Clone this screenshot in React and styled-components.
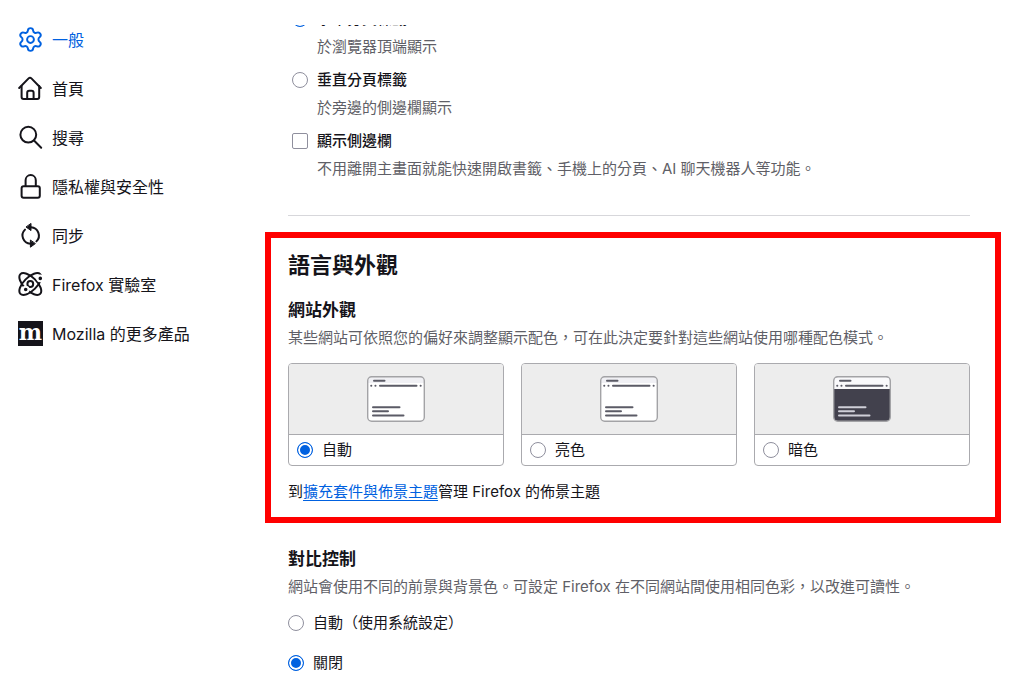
import React from "react";
import styled, { createGlobalStyle } from "styled-components";
import { Settings } from "lucide-react";

const GlobalStyle = createGlobalStyle`
  * {
    box-sizing: border-box;
  }
  body {
    margin: 0;
    background: #ffffff;
    color: #15141a;
    font-family: "Inter", "Noto Sans CJK TC", sans-serif;
    font-size: 15px;
    line-height: 22px;
  }
`;

const Page = styled.div`
  display: flex;
  padding-top: 25px;
`;

const Sidebar = styled.nav`
  display: flex;
  flex-direction: column;
  flex: 0 0 265px;
  gap: 24px;
  padding-top: 2px;
  padding-left: 18px;
`;

const Category = styled.a`
  display: flex;
  align-items: center;
  gap: 9px;
  height: 25px;
  font-size: 16px;
  text-decoration: none;
  color: ${(props) => (props.$active ? "#0061e0" : "#15141a")};
`;

const Icon = styled.svg`
  display: block;
  width: 25px;
  height: 25px;
  fill: none;
  stroke: currentColor;
  stroke-width: 2;
  stroke-linecap: round;
  stroke-linejoin: round;
`;

const GearIcon = styled(Icon)`
  stroke-width: 1.7;
`;

const MozillaMark = styled.span`
  width: 25px;
  height: 25px;
  background: #15141a;
  color: #ffffff;
  font-family: "DejaVu Serif", serif;
  font-size: 22px;
  font-weight: bold;
  line-height: 23px;
  text-align: center;
`;

const Main = styled.main`
  flex: 1;
  min-width: 0;
  padding-right: 23px;
`;

const Section = styled.section`
  padding: 0 31px 0 23px;
`;

// the list is scrolled a little, its first row is cut by the top edge
const TabsSection = styled(Section)`
  overflow: hidden;
`;

const OptionList = styled.div`
  margin-top: -17px;
  padding-left: 4px;
  padding-bottom: 35px;
  border-bottom: 1px solid #d7d7db;
  margin-left: 0;
`;

const Option = styled.div`
  margin-bottom: 11px;
`;

const OptionLabel = styled.label`
  display: flex;
  align-items: center;
  gap: 9px;
  font-weight: ${(props) => (props.$strong ? 500 : 400)};
`;

const OptionHint = styled.p`
  margin: 6px 0 0 25px;
  color: #5f5f67;
`;

const Radio = styled.input.attrs({ type: "radio" })`
  appearance: none;
  flex: none;
  width: 16px;
  height: 16px;
  margin: 0;
  border: 1px solid #8f8f9d;
  border-radius: 50%;
  background: #ffffff;

  &:checked {
    border-color: #0061e0;
    background: #0061e0;
    box-shadow: inset 0 0 0 2px #ffffff;
  }
`;

const Checkbox = styled.input.attrs({ type: "checkbox" })`
  appearance: none;
  flex: none;
  width: 16px;
  height: 16px;
  margin: 0;
  border: 1px solid #8f8f9d;
  border-radius: 2px;
  background: #ffffff;
`;

const Highlight = styled.section`
  margin-top: 16px;
  padding: 12px 25px 14px 17px;
  border: 6px solid #ff0000;
`;

const Title = styled.h1`
  margin: 0 0 18px;
  font-size: 22px;
  font-weight: 600;
  line-height: 30px;
`;

const Subtitle = styled.h2`
  margin: 0;
  font-size: 17px;
  font-weight: 600;
  line-height: 24px;
`;

const Description = styled.p`
  margin: 5px 0 0;
  color: #5f5f67;
`;

const Cards = styled.div`
  display: grid;
  grid-template-columns: repeat(3, 1fr);
  gap: 17px;
  margin: 14px 0 15px;
`;

const Card = styled.label`
  display: block;
  overflow: hidden;
  border: 1px solid #aaaaae;
  border-radius: 4px;
`;

const Preview = styled.div`
  display: flex;
  align-items: center;
  justify-content: center;
  height: 71px;
  border-bottom: 1px solid #aaaaae;
  background: #ededed;
`;

const CardLabel = styled.div`
  display: flex;
  align-items: center;
  gap: 9px;
  height: 30px;
  padding: 0 8px;
`;

const ThemeText = styled.p`
  margin: 0;
`;

const Link = styled.a`
  color: #0061e0;
  text-decoration: underline;
  text-underline-offset: 3px;
`;

const ContrastSection = styled(Section)`
  padding-top: 24px;
`;

const ContrastOptions = styled.div`
  display: flex;
  flex-direction: column;
  gap: 18px;
  margin-top: 14px;
`;

function HomeIcon() {
  return (
    <Icon viewBox="0 0 25 25">
      <path d="M1.2 12 10.6 2.4a2 2 0 0 1 2.8 0L22.8 12" />
      <path d="M3.6 10v11a2 2 0 0 0 2 2h13.6a2 2 0 0 0 2-2V10" />
      <path d="M9.2 23v-6.3a2 2 0 0 1 2-2h2.4a2 2 0 0 1 2 2V23" />
    </Icon>
  );
}

function SearchIcon() {
  return (
    <Icon viewBox="0 0 25 25">
      <circle cx="10.3" cy="9.7" r="7.9" />
      <path d="m16 15.5 7.2 7.2" />
    </Icon>
  );
}

function LockIcon() {
  return (
    <Icon viewBox="0 0 25 25">
      <rect x="3.6" y="12.3" width="18.2" height="11.4" rx="2" />
      <path d="M7.6 12V6.2a5.1 5.1 0 0 1 10.2 0V12" />
    </Icon>
  );
}

function SyncIcon() {
  return (
    <Icon viewBox="0 0 25 25">
      <path d="M13 4.2a8.3 8.3 0 0 1 5.4 14.2" />
      <path d="M12.4 20.8A8.3 8.3 0 0 1 7 6.6" />
      <path
        d="M13 .8v6.8L8.3 4.2ZM12.4 17.4v6.8l4.7-3.4Z"
        fill="currentColor"
        strokeWidth="1"
      />
    </Icon>
  );
}

function LabsIcon() {
  return (
    <Icon viewBox="0 0 25 25">
      <ellipse cx="12.3" cy="12" rx="14" ry="6.6" transform="rotate(45 12.3 12)" />
      <ellipse cx="12.3" cy="12" rx="14" ry="6.6" transform="rotate(-45 12.3 12)" />
      <circle cx="12.3" cy="12" r="2.9" />
      <g fill="currentColor" stroke="#ffffff">
        <circle cx="22.3" cy="6.4" r="2.8" />
        <circle cx="7.7" cy="17.5" r="2.8" />
      </g>
    </Icon>
  );
}

function WindowPreview({ dark }) {
  const line = dark ? "#cfcfd8" : "#5b5b66";
  return (
    <svg width="58" height="46" viewBox="0 0 58 46" fill="none">
      <rect x="1" y="1" width="56" height="44" rx="4" fill={dark ? "#42414d" : "#ffffff"} />
      <path
        d={dark ? "M1 13V5a4 4 0 0 1 4-4h48a4 4 0 0 1 4 4v8Z" : "M1 7V5a4 4 0 0 1 4-4h48a4 4 0 0 1 4 4v2Z"}
        fill={dark ? "#f9f9fb" : "#f0f0f4"}
      />
      <g stroke="#5b5b66" strokeWidth="2" strokeLinecap="round">
        <path d="M7 4.8h10.5M13 9.8h36.5" />
        <path d="M4.2 9.8h.1M8.4 9.8h.1M53.6 9.8h.1" />
      </g>
      <path
        d="M6 31.2h26.5M6 35.2h15M6 39.6h30.5"
        stroke={line}
        strokeWidth="2"
        strokeLinecap="round"
      />
      <rect x=".7" y=".7" width="56.6" height="44.6" rx="4" stroke="#a3a3a6" strokeWidth="1.4" />
    </svg>
  );
}

const categories = [
  {
    id: "general",
    label: "一般",
    icon: <GearIcon as={Settings} viewBox="1 1 22 22" />,
  },
  { id: "home", label: "首頁", icon: <HomeIcon /> },
  { id: "search", label: "搜尋", icon: <SearchIcon /> },
  { id: "privacy", label: "隱私權與安全性", icon: <LockIcon /> },
  { id: "sync", label: "同步", icon: <SyncIcon /> },
  { id: "labs", label: "Firefox 實驗室", icon: <LabsIcon /> },
  { id: "more", label: "Mozilla 的更多產品", icon: <MozillaMark>m</MozillaMark> },
];

const themes = [
  { id: "auto", label: "自動" },
  { id: "light", label: "亮色" },
  { id: "dark", label: "暗色" },
];

class App extends React.Component {
  state = {
    category: "general",
    tabs: "horizontal",
    theme: "auto",
    contrast: "off",
  };

  render() {
    const { category, tabs, theme, contrast } = this.state;

    return (
      <>
        <GlobalStyle />
        <Page>
          <Sidebar>
            {categories.map((item) => (
              <Category
                key={item.id}
                href={`#${item.id}`}
                $active={item.id === category}
                onClick={() => this.setState({ category: item.id })}
              >
                {item.icon}
                {item.label}
              </Category>
            ))}
          </Sidebar>
          <Main>
            <TabsSection>
              <OptionList>
                <Option>
                  <OptionLabel $strong>
                    <Radio
                      name="tabs"
                      checked={tabs === "horizontal"}
                      onChange={() => this.setState({ tabs: "horizontal" })}
                    />
                    水平分頁標籤
                  </OptionLabel>
                  <OptionHint>於瀏覽器頂端顯示</OptionHint>
                </Option>
                <Option>
                  <OptionLabel $strong>
                    <Radio
                      name="tabs"
                      checked={tabs === "vertical"}
                      onChange={() => this.setState({ tabs: "vertical" })}
                    />
                    垂直分頁標籤
                  </OptionLabel>
                  <OptionHint>於旁邊的側邊欄顯示</OptionHint>
                </Option>
                <OptionLabel $strong>
                  <Checkbox />
                  顯示側邊欄
                </OptionLabel>
                <OptionHint>
                  不用離開主畫面就能快速開啟書籤、手機上的分頁、AI 聊天機器人等功能。
                </OptionHint>
              </OptionList>
            </TabsSection>

            <Highlight>
              <Title>語言與外觀</Title>
              <Subtitle>網站外觀</Subtitle>
              <Description>
                某些網站可依照您的偏好來調整顯示配色，可在此決定要針對這些網站使用哪種配色模式。
              </Description>
              <Cards>
                {themes.map((item) => (
                  <Card key={item.id}>
                    <Preview>
                      <WindowPreview dark={item.id === "dark"} />
                    </Preview>
                    <CardLabel>
                      <Radio
                        name="theme"
                        checked={theme === item.id}
                        onChange={() => this.setState({ theme: item.id })}
                      />
                      {item.label}
                    </CardLabel>
                  </Card>
                ))}
              </Cards>
              <ThemeText>
                到<Link href="#themes">擴充套件與佈景主題</Link>管理 Firefox 的佈景主題
              </ThemeText>
            </Highlight>

            <ContrastSection>
              <Subtitle>對比控制</Subtitle>
              <Description>
                網站會使用不同的前景與背景色。可設定 Firefox 在不同網站間使用相同色彩，以改進可讀性。
              </Description>
              <ContrastOptions>
                <OptionLabel>
                  <Radio
                    name="contrast"
                    checked={contrast === "auto"}
                    onChange={() => this.setState({ contrast: "auto" })}
                  />
                  自動（使用系統設定）
                </OptionLabel>
                <OptionLabel>
                  <Radio
                    name="contrast"
                    checked={contrast === "off"}
                    onChange={() => this.setState({ contrast: "off" })}
                  />
                  關閉
                </OptionLabel>
              </ContrastOptions>
            </ContrastSection>
          </Main>
        </Page>
      </>
    );
  }
}

export default App;
